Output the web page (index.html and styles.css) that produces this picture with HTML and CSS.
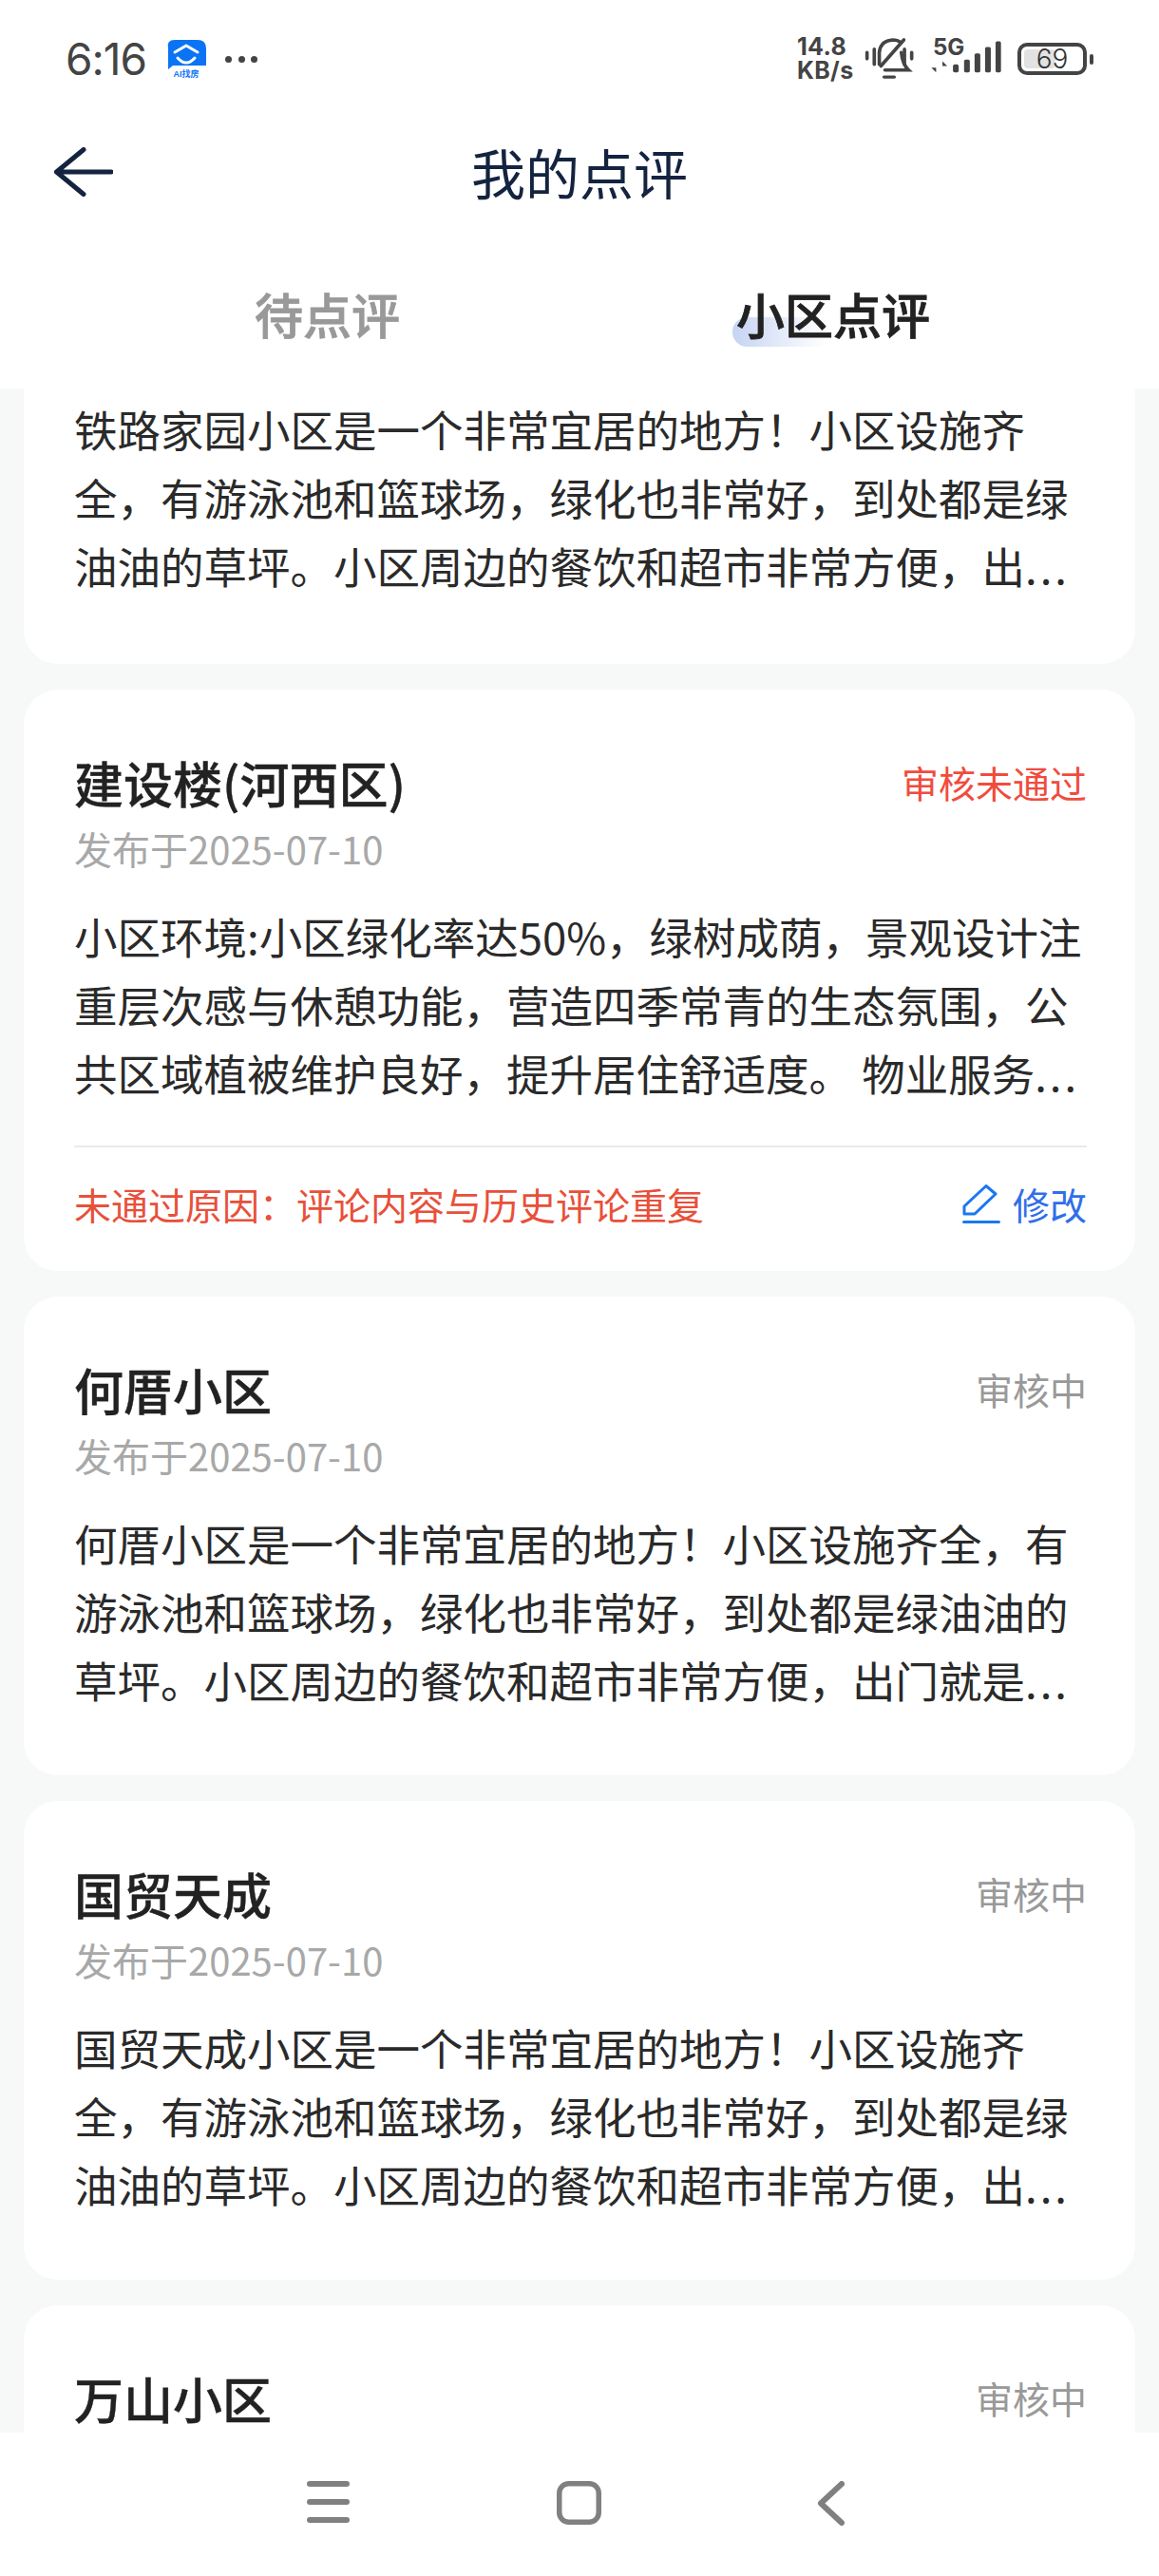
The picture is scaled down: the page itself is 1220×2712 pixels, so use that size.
FILE: index.html
```html
<!DOCTYPE html>
<html lang="zh-CN">
<head>
<meta charset="utf-8">
<title>我的点评</title>
<link rel="stylesheet" href="styles.css">
</head>
<body>
<div class="page">
  <header class="header">
    <div class="statusbar">
      <div class="status-left">
        <span class="clock">6:16</span>
        <span class="app-badge">
          <svg class="app-icon" viewBox="0 0 42 31" width="42" height="31">
            <path d="M9 0H33Q42 0 42 9V27H7L2 31V9Q0 0 9 0Z" fill="#0a74f5"/>
            <path d="M9 13L21 6L33 13" fill="none" stroke="#fff" stroke-width="3" stroke-linecap="round" stroke-linejoin="round"/>
            <path d="M12 19Q21 29 30 19" fill="none" stroke="#fff" stroke-width="3" stroke-linecap="round"/>
          </svg>
          <span class="app-label">AI找房</span>
        </span>
        <span class="dots"><i></i><i></i><i></i></span>
      </div>
      <div class="status-right">
        <span class="speed"><span>14.8</span><span>KB/s</span></span>
        <svg class="bell" viewBox="270 60 170 145" width="57" height="48" fill="none" stroke="#444" stroke-width="11" stroke-linecap="round">
          <path d="M283 112V132M306 102V150M425 112V132M402 102V150"/>
          <path d="M322 150V112Q326 74 365 72Q380 72 390 80"/>
          <path d="M327 155L400 72"/>
          <path d="M392 112Q396 150 415 168H340"/>
          <path d="M337 190H370" stroke-width="10"/>
        </svg>
        <span class="signal">
          <span class="net">5G</span>
          <svg viewBox="475 75 230 110" width="77" height="37">
            <path d="M497 145V180L482 165H497ZM517 180V145L532 160H517Z" fill="#444"/>
            <rect x="550" y="155" width="18" height="25" rx="6" fill="#444"/>
            <rect x="585" y="140" width="18" height="40" rx="5" fill="#444"/>
            <rect x="618" y="120" width="18" height="60" rx="5" fill="#444"/>
            <rect x="651" y="100" width="18" height="80" rx="5" fill="#444"/>
            <rect x="684" y="82" width="17" height="98" rx="5" fill="#444"/>
          </svg>
        </span>
        <span class="battery"><span class="battery-fill"></span><span class="battery-num">69</span></span>
        <span class="battery-tip"></span>
      </div>
    </div>
    <div class="titlebar">
      <svg class="back" viewBox="0 0 62 52" width="62" height="52" fill="none" stroke="#14233f" stroke-width="5" stroke-linecap="round" stroke-linejoin="round">
        <path d="M31 2.500L2.500 26L31 49.500M2.500 26H60"/>
      </svg>
      <h1 class="title">我的点评</h1>
    </div>
    <nav class="tabs">
      <span class="tab">待点评</span>
      <span class="tab tab-active"><span class="tab-mark"></span><span class="tab-text">小区点评</span></span>
    </nav>
  </header>

  <main class="list">
    <article class="card card-partial">
      <p class="body">铁路家园小区是一个非常宜居的地方！小区设施齐全，有游泳池和篮球场，绿化也非常好，到处都是绿油油的草坪。小区周边的餐饮和超市非常方便，出<span class="more">...</span></p>
    </article>

    <article class="card card-rejected">
      <div class="card-head"><h2 class="name">建设楼(河西区)</h2><span class="status status-rejected">审核未通过</span></div>
      <div class="date">发布于2025-07-10</div>
      <p class="body">小区环境:小区绿化率达50%，绿树成荫，景观设计注重层次感与休憩功能，营造四季常青的生态氛围，公共区域植被维护良好，提升居住舒适度。 物业服务<span class="more">...</span></p>
      <div class="card-foot">
        <span class="reason">未通过原因：评论内容与历史评论重复</span>
        <span class="edit">
          <svg viewBox="0 0 40 41" width="40" height="41" fill="none" stroke="#1a78f0" stroke-width="3" stroke-linecap="round" stroke-linejoin="round">
            <path d="M2 23L25 1.500L35 10L13 31H2Z"/>
            <path d="M1.500 39.500H38.500"/>
          </svg>
          <span class="edit-text">修改</span>
        </span>
      </div>
    </article>

    <article class="card">
      <div class="card-head"><h2 class="name">何厝小区</h2><span class="status">审核中</span></div>
      <div class="date">发布于2025-07-10</div>
      <p class="body">何厝小区是一个非常宜居的地方！小区设施齐全，有游泳池和篮球场，绿化也非常好，到处都是绿油油的草坪。小区周边的餐饮和超市非常方便，出门就是<span class="more">...</span></p>
    </article>

    <article class="card">
      <div class="card-head"><h2 class="name">国贸天成</h2><span class="status">审核中</span></div>
      <div class="date">发布于2025-07-10</div>
      <p class="body">国贸天成小区是一个非常宜居的地方！小区设施齐全，有游泳池和篮球场，绿化也非常好，到处都是绿油油的草坪。小区周边的餐饮和超市非常方便，出<span class="more">...</span></p>
    </article>

    <article class="card">
      <div class="card-head"><h2 class="name">万山小区</h2><span class="status">审核中</span></div>
    </article>
  </main>

  <footer class="navbar">
    <svg viewBox="0 0 45 44" width="45" height="44" fill="none" stroke="#808080" stroke-width="6" stroke-linecap="round">
      <path d="M3 3H42M3 22H42M3 41H42"/>
    </svg>
    <svg class="nav-home" viewBox="0 0 47 46" width="47" height="46" fill="none" stroke="#808080" stroke-width="5.500">
      <rect x="2.750" y="2.750" width="41.500" height="40.500" rx="10"/>
    </svg>
    <svg class="nav-back" viewBox="0 0 29 47" width="29" height="47" fill="none" stroke="#808080" stroke-width="6" stroke-linecap="round" stroke-linejoin="round">
      <path d="M26 3L4 23.500L26 44"/>
    </svg>
  </footer>
</div>
</body>
</html>
```

FILE: styles.css
```css
* { box-sizing: border-box; }

html, body {
  margin: 0;
  padding: 0;
  background: #f7f8f8;
}

body {
  font-family: "Noto Sans CJK SC", "Noto Sans", sans-serif;
  color: #222;
}

.page {
  display: flex;
  flex-direction: column;
  height: 2712px;
  overflow: hidden;
}

.header {
  flex: none;
  height: 409px;
  background: #fff;
}

.statusbar {
  height: 124px;
  padding: 0 69px 0 69px;
  display: flex;
  align-items: center;
  justify-content: space-between;
}

.status-left {
  display: flex;
  align-items: center;
}

.clock {
  font-family: Inter, Roboto, sans-serif;
  font-size: 46px;
  line-height: 50px;
  color: #444;
  letter-spacing: -1px;
  width: 106px;
}

.app-badge {
  display: flex;
  flex-direction: column;
  align-items: center;
  width: 42px;
  height: 42px;
  margin-top: 2px;
}

.app-icon { display: block; }

.app-label {
  font-family: "Liberation Sans", "Noto Sans CJK SC", sans-serif;
  font-size: 9px;
  line-height: 11px;
  font-weight: 700;
  color: #0a74f5;
  white-space: nowrap;
}

.dots {
  display: flex;
  gap: 6.500px;
  margin-left: 20px;
}

.dots i {
  display: block;
  width: 7px;
  height: 7px;
  border-radius: 50%;
  background: #444;
}

.status-right {
  display: flex;
  align-items: center;
  height: 46px;
}

.speed {
  display: flex;
  flex-direction: column;
  font-family: Inter, "Liberation Sans", sans-serif;
  font-weight: 700;
  font-size: 25px;
  line-height: 25px;
  color: #444;
  width: 70px;
  padding-left: 1px;
  letter-spacing: 0.3px;
  margin-left: 1px;
}

.bell { display: block; }

.signal {
  position: relative;
  display: block;
  width: 77px;
  height: 37px;
  margin-left: 13px;
  margin-right: 16px;
  align-self: flex-start;
  margin-top: 2px;
}

.signal svg { display: block; }

.net {
  position: absolute;
  left: 4px;
  top: -3px;
  font-family: Inter, "Liberation Sans", sans-serif;
  font-weight: 700;
  font-size: 24px;
  line-height: 24px;
  color: #444;
}

.battery {
  position: relative;
  display: flex;
  align-items: center;
  justify-content: center;
  width: 73px;
  height: 34px;
  border: 4px solid #444;
  border-radius: 10px;
}

.battery-fill {
  position: absolute;
  left: 3px;
  top: 3px;
  bottom: 3px;
  width: 33px;
  background: #e2e2e2;
  border-radius: 4px;
}

.battery-num {
  position: relative;
  font-family: Inter, Roboto, sans-serif;
  font-size: 28px;
  font-weight: 300;
  line-height: 26px;
  color: #333;
}

.battery-tip {
  width: 4px;
  height: 11px;
  margin-left: 3px;
  background: #444;
  border-radius: 2px;
}

.titlebar {
  position: relative;
  height: 114px;
  display: flex;
  align-items: center;
  justify-content: center;
}

.back {
  position: absolute;
  left: 57px;
  top: 31px;
}

.title {
  margin: -3px 0 0;
  font-size: 57px;
  line-height: 70px;
  font-weight: 400;
  color: #14233f;
}

.tabs {
  display: flex;
  gap: 354px;
  padding: 62px 0 0 268px;
}

.tab {
  position: relative;
  font-size: 51px;
  line-height: 60px;
  font-weight: 500;
  -webkit-text-stroke: 0.8px currentColor;
  color: #999;
}

.tab-active { color: #222; }

.tab-text { position: relative; }

.tab-mark {
  position: absolute;
  left: -4px;
  top: 34px;
  width: 99px;
  height: 31px;
  border-radius: 16px 0 0 16px;
  background: linear-gradient(90deg, #c6d4f3, #ffffff);
}

.list {
  flex: 1;
  min-height: 0;
  overflow: hidden;
  padding: 0 25px;
  display: flex;
  flex-direction: column;
  gap: 27px;
}

.card {
  flex: none;
  background: #fff;
  border-radius: 36px;
  padding: 65px 51px 65px 53px;
}

.card-partial {
  border-radius: 0 0 36px 36px;
  padding-top: 6px;
  padding-bottom: 68px;
}

.card-rejected {
  padding-bottom: 36px;
}

.card-head {
  display: flex;
  align-items: center;
  justify-content: space-between;
  height: 70px;
}

.name {
  margin: -5px 0 0;
  font-size: 52px;
  line-height: 70px;
  font-weight: 500;
  -webkit-text-stroke: 0.4px currentColor;
  color: #222;
}

.status {
  font-size: 39px;
  line-height: 70px;
  margin-top: -7px;
  color: #999;
}

.status-rejected { color: #f04c3e; }

.date {
  font-size: 40px;
  line-height: 70px;
  color: #a8a8a8;
  margin-top: -3px;
}

.body {
  margin: 21px 0 0;
  font-size: 45.500px;
  line-height: 72px;
  color: #2a2a2a;
}

.more {
  letter-spacing: 3px;
}

.card-partial .body { margin-top: 0; }

.card-foot {
  display: flex;
  align-items: center;
  justify-content: space-between;
  margin-top: 41px;
  height: 96px;
  padding-top: 24px;
  border-top: 2px solid #eaeaea;
}

.reason {
  font-size: 39px;
  line-height: 70px;
  color: #e8503a;
}

.edit {
  display: flex;
  align-items: center;
  gap: 13px;
}

.edit svg { display: block; }

.edit-text {
  font-size: 39px;
  line-height: 70px;
  color: #2f6fe8;
}

.navbar {
  flex: none;
  height: 151px;
  background: #fff;
  display: flex;
  align-items: flex-start;
  padding: 51px 0 0 323px;
}

.nav-home { margin-left: 218px; }
.nav-back { margin-left: 227px; }
```
